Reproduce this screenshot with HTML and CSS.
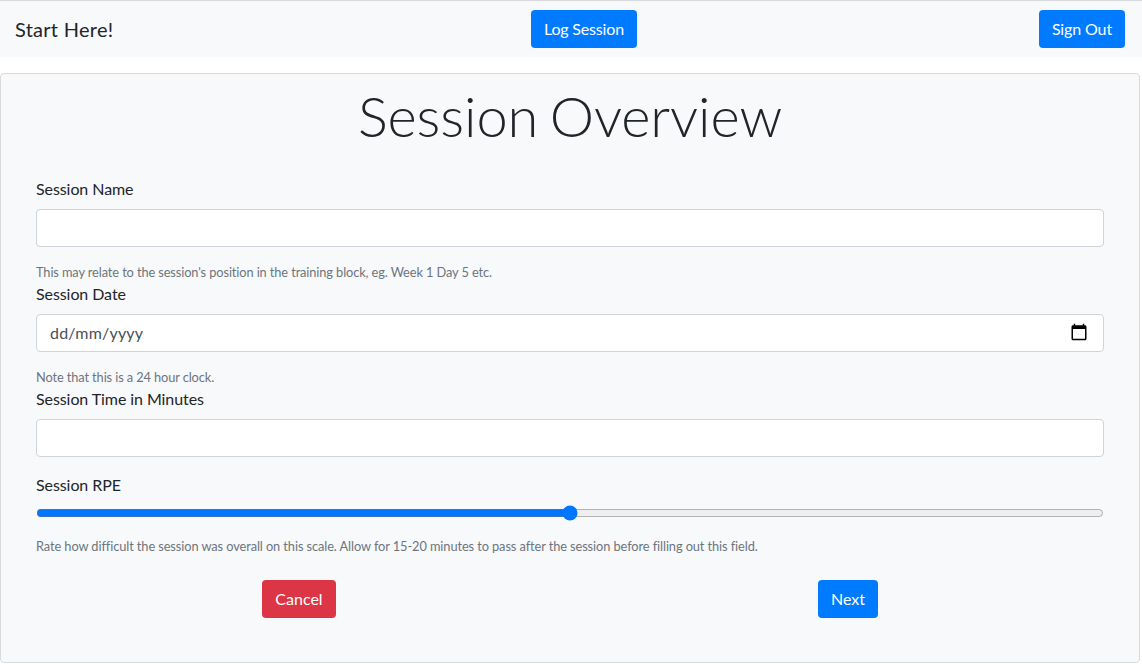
FILE: index.html
```html
<!DOCTYPE html>
<html lang="en">
<head>
<meta charset="utf-8">
<title>Session Overview</title>
<link rel="stylesheet" href="styles.css">
</head>
<body>
<nav class="navbar">
  <div class="nav-left"><a class="brand">Start Here!</a></div>
  <button class="btn btn-primary btn-log">Log Session</button>
  <div class="nav-right"><button class="btn btn-primary">Sign Out</button></div>
</nav>
<main class="card">
  <h1 class="title">Session Overview</h1>
  <form class="form">
    <label class="label" for="name">Session Name</label>
    <input class="control" id="name" type="text">
    <small class="help">This may relate to the session's position in the training block, eg. Week 1 Day 5 etc.</small>
    <label class="label">Session Date</label>
    <div class="control date">
      <span>dd/mm/yyyy</span>
      <svg class="calendar" viewBox="0 0 24 24"><path d="M20 3h-1V1h-2v2H7V1H5v2H4c-1.100 0-2 .9-2 2v16c0 1.100.9 2 2 2h16c1.100 0 2-.9 2-2V5c0-1.100-.9-2-2-2zm0 18H4V8h16v13z"/></svg>
    </div>
    <small class="help">Note that this is a 24 hour clock.</small>
    <label class="label" for="minutes">Session Time in Minutes</label>
    <input class="control" id="minutes" type="text">
    <label class="label" for="rpe">Session RPE</label>
    <input class="range" id="rpe" type="range">
    <small class="help help-rpe">Rate how difficult the session was overall on this scale. Allow for 15-20 minutes to pass after the session before filling out this field.</small>
    <div class="actions">
      <button class="btn btn-danger" type="button">Cancel</button>
      <button class="btn btn-primary" type="button">Next</button>
    </div>
  </form>
</main>
</body>
</html>
```
FILE: styles.css
```css
*, *::before, *::after { box-sizing: border-box; }
body {
  margin: 0;
  font-family: Lato, sans-serif;
  font-size: 16px;
  line-height: 24px;
  color: #212529;
  background: #fff;
  overflow: hidden;
}
.navbar {
  display: flex;
  align-items: center;
  height: 57px;
  padding: 0 17px 0 15px;
  background: #f8f9fb;
  border-top: 1px solid #d9dadd;
}
.nav-left, .nav-right { flex: 1; display: flex; }
.nav-left { flex: 0 0 516px; }
.nav-right { justify-content: flex-end; }
.brand { font-size: 20px; line-height: 30px; letter-spacing: 0.27px; }
.btn {
  height: 38px;
  padding: 6px 12px;
  border: 1px solid transparent;
  border-radius: 4px;
  font: 400 16px/24px Lato, sans-serif;
  color: #fff;
}
.btn-primary { background: #007bff; }
.btn-danger { background: #dc3545; }
.navbar .btn { letter-spacing: -0.13px; }
.navbar .btn-log { letter-spacing: -0.18px; }
.card {
  width: 1140px;
  height: 590px;
  margin-top: 16px;
  padding: 8px 35px 0;
  background: #f8f9fb;
  border: 1px solid #d9dadb;
  border-radius: 4px;
}
.title {
  margin: 0;
  font-size: 56px;
  line-height: 67px;
  font-weight: 300;
  letter-spacing: -0.09px;
  word-spacing: -3.5px;
  text-align: center;
}
.form { padding-top: 28px; }
.label { display: block; margin-bottom: 8px; letter-spacing: -0.08px; }
.control {
  display: flex;
  align-items: center;
  width: 100%;
  height: 38px;
  margin: 0 0 16px;
  padding: 6px 13px;
  color: #495057;
  background: #fff;
  border: 1px solid #ced4da;
  border-radius: 4px;
}
.date { justify-content: space-between; letter-spacing: 0.2px; }
.calendar { width: 18px; height: 18px; margin: 0 2.5px 2px 0; fill: #000; }
.help {
  display: block;
  font-size: 12.8px;
  line-height: 19px;
  letter-spacing: -0.105px;
  color: #6c757d;
}
.help-rpe { letter-spacing: -0.09px; }
.range {
  display: block;
  width: 100%;
  height: 16px;
  margin: 0 0 16px;
  accent-color: #0075ff;
}
.actions {
  display: grid;
  grid-template-columns: 1fr 1fr;
  margin: 0 -18.5px 0 -11.5px;
  padding-top: 24px;
}
.actions .btn { justify-self: center; }
```
